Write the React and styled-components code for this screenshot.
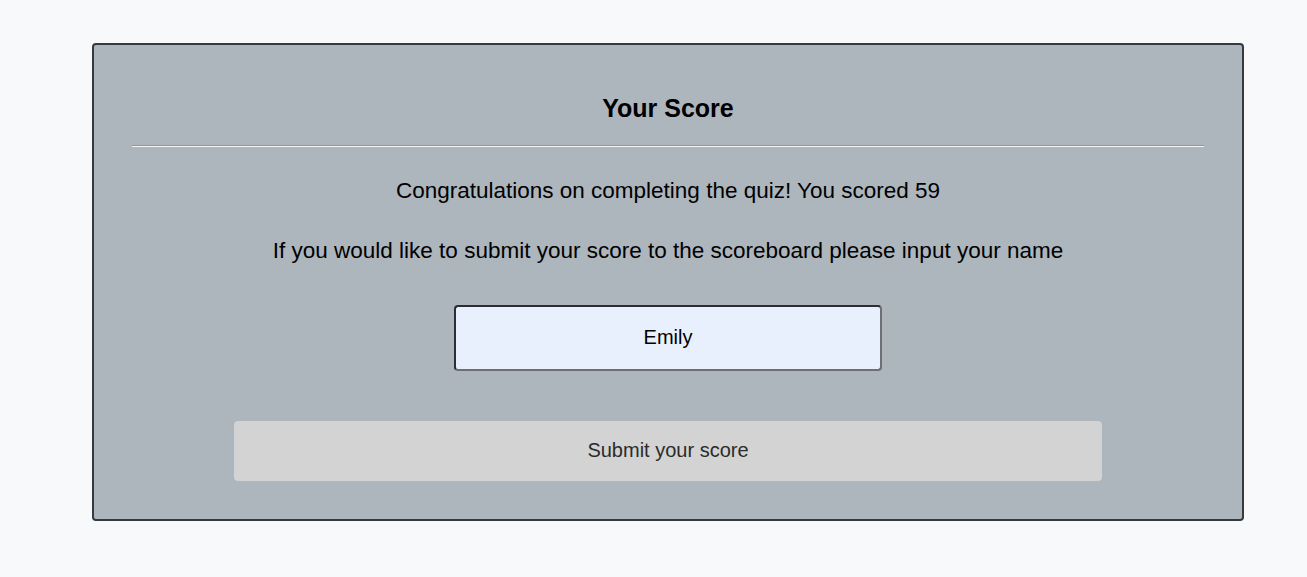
import React from 'react';
import styled, { createGlobalStyle } from 'styled-components';

const GlobalStyle = createGlobalStyle`
  body {
    margin: 0;
    background: #f8f9fa;
    font-family: "Liberation Sans", Arial, sans-serif;
  }
`;

const Page = styled.div`
  padding: 43px 63px 56px 92px;
`;

const Card = styled.div`
  display: flex;
  flex-direction: column;
  align-items: center;
  background: #adb5bd;
  border: 2px solid #343a40;
  border-radius: 4px;
  padding: 49px 38px 38px;
`;

const Title = styled.h2`
  margin: 0;
  font-size: 25px;
  line-height: 28px;
  font-weight: bold;
  color: #000;
`;

const Divider = styled.hr`
  align-self: stretch;
  margin: 23px 0 0;
  border: none;
  border-top: 1px solid #8f979e;
  border-bottom: 1px solid #f4f5f6;
`;

const Message = styled.p`
  margin: ${(p) => p.$top}px 0 0;
  font-size: 22.5px;
  line-height: 26px;
  color: #000;
  text-align: center;
`;

const NameInput = styled.input`
  box-sizing: border-box;
  margin-top: 41px;
  width: 428px;
  height: 66px;
  padding: 0 0 2px;
  border: 2px solid #2b2e33;
  border-right-color: #6c6f73;
  border-bottom-color: #6c6f73;
  border-radius: 4px;
  background: #e8f0fe;
  font-family: inherit;
  font-size: 20px;
  color: #000;
  text-align: center;
  outline: none;
`;

const SubmitButton = styled.button`
  margin-top: 50px;
  width: 868px;
  height: 60px;
  padding: 0 0 2px;
  border: none;
  border-radius: 4px;
  background: #d3d3d3;
  font-family: inherit;
  font-size: 20px;
  color: #2b2b2b;
  cursor: pointer;
`;

export default function App() {
  return (
    <>
      <GlobalStyle />
      <Page>
        <Card>
          <Title>Your Score</Title>
          <Divider />
          <Message $top={31}>Congratulations on completing the quiz! You scored 59</Message>
          <Message $top={34}>If you would like to submit your score to the scoreboard please input your name</Message>
          <NameInput defaultValue="Emily" />
          <SubmitButton>Submit your score</SubmitButton>
        </Card>
      </Page>
    </>
  );
}
